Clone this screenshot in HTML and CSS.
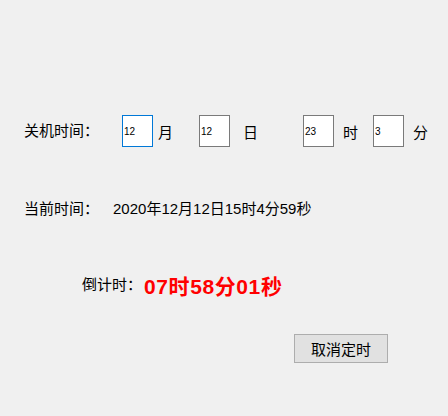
FILE: index.html
```html
<!DOCTYPE html>
<html lang="zh-CN">
<head>
    <meta charset="UTF-8">
    <title>定时关机</title>
    <link rel="stylesheet" href="styles.css">
</head>
<body>
    <div class="form">
        <div class="row shutdown">
            <span class="label">关机时间：</span>
            <input type="text" class="num month focus" value="12">
            <span class="unit">月</span>
            <input type="text" class="num day" value="12">
            <span class="unit unit-day">日</span>
            <input type="text" class="num hour" value="23">
            <span class="unit unit-wide">时</span>
            <input type="text" class="num minute" value="3">
            <span class="unit unit-wide">分</span>
        </div>

        <div class="row now">
            <span class="label">当前时间：</span>
            <span class="now-text">2020年12月12日15时4分59秒</span>
        </div>

        <div class="row countdown">
            <span class="label">倒计时：</span>
            <span class="remain">07时58分01秒</span>
        </div>

        <div class="actions">
            <button class="cancel">取消定时</button>
        </div>
    </div>
</body>
</html>
```

FILE: styles.css
```css
body {
    margin: 0;
    background-color: #f0f0f0;
    font-family: 'Liberation Sans', 'Noto Sans CJK SC', sans-serif;
    color: #000;
}

.form {
    padding-top: 115px;
}

.row {
    display: flex;
    align-items: center;
}

.label {
    font-size: 15px;
    line-height: 20px;
}

/* shutdown time inputs */
.shutdown {
    height: 32px;
    padding-left: 24px;
}

.num {
    width: 31px;
    height: 32px;
    box-sizing: border-box;
    border: 1px solid #7a7a7a;
    background: #fff;
    padding: 0 1px;
    margin: 0;
    font-family: 'Liberation Sans', sans-serif;
    font-size: 10px;
    outline: none;
}

.num.focus {
    border-color: #0078d7;
}

.month { margin-left: 23px; }
.day { margin-left: 26px; }
.hour { margin-left: 45px; }
.minute { margin-left: 15px; }

.unit {
    font-size: 15px;
    margin-left: 5px;
    width: 15px;
}

.unit-day {
    margin-left: 13px;
}

.unit-wide {
    margin-left: 9px;
}

/* current time */
.now {
    margin-top: 52px;
    height: 20px;
    padding-left: 24px;
}

.now-text {
    margin-left: 14px;
    font-size: 15px;
    line-height: 18px;
}

/* countdown */
.countdown {
    margin-top: 52px;
    height: 28px;
    padding-left: 82px;
}

.remain {
    margin-left: 2px;
    color: #ff0000;
    font-size: 21px;
    font-weight: bold;
    letter-spacing: 0.6px;
}

.actions {
    margin-top: 35px;
    padding-left: 294px;
}

.cancel {
    width: 94px;
    height: 29px;
    background-color: #e1e1e1;
    border: 1px solid #adadad;
    font-family: 'Liberation Sans', 'Noto Sans CJK SC', sans-serif;
    font-size: 15px;
    color: #000;
    padding: 0;
}
```
